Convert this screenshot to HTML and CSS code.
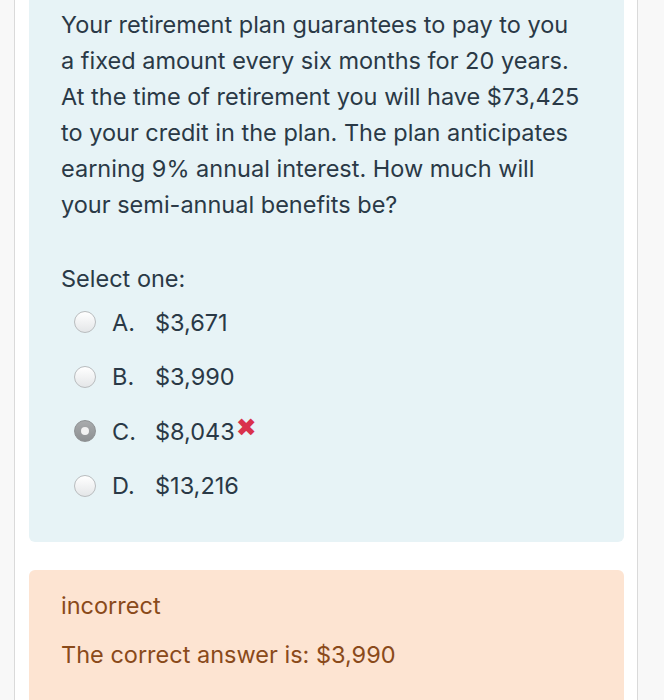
FILE: index.html
```html
<!DOCTYPE html>
<html>
<head>
<meta charset="utf-8">
<link rel="stylesheet" href="styles.css">
</head>
<body>
<div class="page">
  <div class="card">
    <div class="qtext">
      <p class="formulation">Your retirement plan guarantees to pay to you a fixed amount every six months for 20 years. At the time of retirement you will have $73,425 to your credit in the plan. The plan anticipates earning 9% annual interest. How much will your semi-annual benefits be?</p>
      <p class="prompt">Select one:</p>
      <div class="answers">
        <div class="option"><span class="radio"></span><span class="letter">A.</span><span class="value">$3,671</span></div>
        <div class="option"><span class="radio"></span><span class="letter">B.</span><span class="value">$3,990</span></div>
        <div class="option"><span class="radio checked"></span><span class="letter">C.</span><span class="value">$8,043</span><span class="wrong">&#10006;</span></div>
        <div class="option"><span class="radio"></span><span class="letter">D.</span><span class="value">$13,216</span></div>
      </div>
    </div>
    <div class="feedback">
      <p class="state">incorrect</p>
      <p class="right">The correct answer is: $3,990</p>
    </div>
  </div>
</div>
</body>
</html>
```

FILE: styles.css
```css
html, body {
  margin: 0;
  padding: 0;
  background: #f8f8f8;
}
body {
  font-family: Inter, "Liberation Sans", Arial, sans-serif;
  font-size: 23.5px;
  line-height: 36px;
  color: #2a3946;
}
.page {
  width: 664px;
  height: 700px;
  overflow: hidden;
  padding: 0 26px 0 14px;
  box-sizing: border-box;
}
.card {
  background: #ffffff;
  border-left: 1px solid #dadada;
  border-right: 1px solid #dadada;
  padding: 0 13px 40px 14px;
  min-height: 700px;
}
.qtext {
  background: #e7f3f6;
  border-radius: 0 0 6px 6px;
  padding: 7px 37px 29px 32px;
}
.qtext p {
  margin: 0;
}
.prompt {
  margin-top: 38px !important;
}
.answers {
  margin-top: -2px;
}
.option {
  display: flex;
  align-items: center;
  height: 54.5px;
  line-height: normal;
}
.radio {
  width: 20px;
  height: 20px;
  border-radius: 50%;
  border: 1px solid #b9bcbe;
  background: linear-gradient(#ffffff, #e4e6e8);
  margin-left: 13px;
  margin-right: 16px;
  flex: none;
  position: relative;
}
.radio.checked {
  border-color: #8f9294;
  background: linear-gradient(#a9abad, #8d9092);
}
.radio.checked::after {
  content: "";
  position: absolute;
  left: 6px;
  top: 6px;
  width: 8px;
  height: 8px;
  border-radius: 50%;
  background: #f2f2f2;
}
.letter {
  width: 43px;
  flex: none;
}
.wrong {
  color: #d9314c;
  font-family: "DejaVu Sans", sans-serif;
  font-size: 25px;
  font-weight: bold;
  margin-left: 1px;
  position: relative;
  top: -4px;
}
.feedback {
  margin-top: 28px;
  background: #fde4d2;
  border-radius: 6px 6px 0 0;
  padding: 18px 32px 80px 32px;
  color: #8a4a1a;
}
.feedback p {
  margin: 0;
}
.feedback .right {
  margin-top: 13px;
}
```
